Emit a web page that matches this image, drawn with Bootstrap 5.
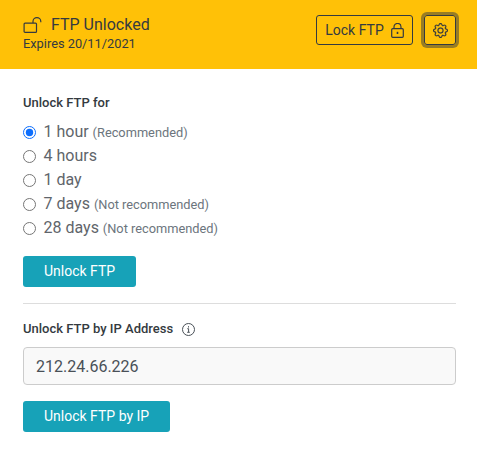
<!DOCTYPE html>
<html lang="en">
<head>
<meta charset="utf-8">
<title>FTP</title>
<link href="https://cdn.jsdelivr.net/npm/bootstrap@5.3.0/dist/css/bootstrap.min.css" rel="stylesheet">
<style>
body{font-family:Roboto,"Liberation Sans",sans-serif;color:#495057;background:#fff;overflow:hidden}
.ftp-head{height:69px;padding:15px 21px 0 23px;color:#343a40;background:#ffc107}
.ftp-title{font-size:16px;line-height:19px;margin-left:9px}
.ftp-exp{font-size:12.8px;line-height:15px;margin-top:2px}
.ftp-lock-btn{height:30px;width:97px;font-size:14px;padding:0;color:#343a40;border:1px solid #343a40;border-radius:3px;gap:7px}
.ftp-gear-btn{height:30px;width:32px;padding:0;color:#343a40;border:1px solid #343a40;border-radius:3px;box-shadow:0 0 0 3px rgba(52,58,64,.5);margin-left:11px}
.ftp-body{padding:26px 21px 0 23px}
.ftp-label{font-size:13px;font-weight:500;line-height:16px;color:#343a40}
.ftp-radios{margin-top:9px}
.ftp-radios .form-check{height:24px;line-height:24px;margin:0;padding-left:20.5px;font-size:16px;color:#5f656b}
.ftp-radios .form-check-label{display:block;line-height:24px}
.ftp-radios .form-check-input{width:13px;height:13px;margin-top:5.5px;margin-left:-20.5px;border-color:#767676}
.ftp-radios .form-check-input:checked{background-color:#fff;border-color:#0d6efd;background-image:url("data:image/svg+xml,%3csvg xmlns='http://www.w3.org/2000/svg' viewBox='-4 -4 8 8'%3e%3ccircle r='2.700' fill='%230d6efd'/%3e%3c/svg%3e")}
.ftp-radios small{font-size:12.8px;color:#6c757d}
.ftp-btn{background:#17a2b8;border:0;color:#fff;font-size:14px;font-weight:400;height:31px;padding:0 21px;border-radius:3px}
.ftp-btn:hover{background:#17a2b8;color:#fff}
.ftp-rule{margin:16px 0 17px;border-color:#ddd;opacity:1}
.ftp-ip{height:38px;font-size:16px;padding:0 12px;background:#f9f9f9;border:1px solid #ccc;border-radius:4px;color:#495057;margin:10px 0 16px}
.ftp-gap{margin-top:16px}
.ftp-info{margin-left:9px}
</style>
</head>
<body>
<div class="ftp-head d-flex align-items-start justify-content-between">
  <div>
    <div class="d-flex align-items-center">
      <svg width="19" height="16" viewBox="0 0 19 16" fill="none" stroke="#343a40" stroke-width="1.2"><rect x="1.100" y="6.100" width="12.400" height="9.300" rx="1"/><path d="M10 6V4.500a3.900 3.900 0 0 1 7.800 0v.8"/></svg>
      <span class="ftp-title">FTP Unlocked</span>
    </div>
    <div class="ftp-exp">Expires 20/11/2021</div>
  </div>
  <div class="d-flex align-items-center">
    <button type="button" class="btn ftp-lock-btn d-flex align-items-center justify-content-center">Lock FTP
      <svg width="13" height="15" viewBox="0 0 13 15" fill="none" stroke="#343a40" stroke-width="1.2"><rect x=".7" y="5.700" width="11.600" height="8.600" rx="1"/><path d="M3 5.700V3.900a3.500 3.500 0 0 1 7 0v1.800"/><path d="M6.500 8.800v2.200" stroke-width="1.600"/></svg>
    </button>
    <button type="button" class="btn ftp-gear-btn d-flex align-items-center justify-content-center" aria-label="Settings">
      <svg width="15" height="15" viewBox="0 0 16 16" fill="#343a40" stroke="#343a40" stroke-width=".25"><path d="M8 4.754a3.246 3.246 0 1 0 0 6.492 3.246 3.246 0 0 0 0-6.492zM5.754 8a2.246 2.246 0 1 1 4.492 0 2.246 2.246 0 0 1-4.492 0z"/><path d="M9.796 1.343c-.527-1.790-3.065-1.790-3.592 0l-.094.319a.873.873 0 0 1-1.255.52l-.292-.16c-1.640-.892-3.433.902-2.540 2.541l.159.292a.873.873 0 0 1-.52 1.255l-.319.094c-1.790.527-1.790 3.065 0 3.592l.319.094a.873.873 0 0 1 .52 1.255l-.16.292c-.892 1.640.901 3.434 2.541 2.540l.292-.159a.873.873 0 0 1 1.255.52l.094.319c.527 1.790 3.065 1.790 3.592 0l.094-.319a.873.873 0 0 1 1.255-.52l.292.16c1.640.893 3.434-.902 2.540-2.541l-.159-.292a.873.873 0 0 1 .52-1.255l.319-.094c1.790-.527 1.790-3.065 0-3.592l-.319-.094a.873.873 0 0 1-.52-1.255l.16-.292c.893-1.640-.902-3.433-2.541-2.540l-.292.159a.873.873 0 0 1-1.255-.52l-.094-.319zm-2.633.283c.246-.835 1.428-.835 1.674 0l.094.319a1.873 1.873 0 0 0 2.693 1.115l.291-.16c.764-.415 1.600.42 1.184 1.185l-.159.292a1.873 1.873 0 0 0 1.116 2.692l.318.094c.835.246.835 1.428 0 1.674l-.319.094a1.873 1.873 0 0 0-1.115 2.693l.16.291c.415.764-.42 1.600-1.185 1.184l-.291-.159a1.873 1.873 0 0 0-2.693 1.116l-.094.318c-.246.835-1.428.835-1.674 0l-.094-.319a1.873 1.873 0 0 0-2.692-1.115l-.292.16c-.764.415-1.600-.42-1.184-1.185l.159-.291A1.873 1.873 0 0 0 1.945 8.930l-.319-.094c-.835-.246-.835-1.428 0-1.674l.319-.094A1.873 1.873 0 0 0 3.060 4.377l-.16-.292c-.415-.764.42-1.600 1.185-1.184l.292.159a1.873 1.873 0 0 0 2.692-1.115l.094-.319z"/></svg>
    </button>
  </div>
</div>
<div class="ftp-body">
  <div class="ftp-label">Unlock FTP for</div>
  <div class="ftp-radios">
    <div class="form-check"><input class="form-check-input" type="radio" name="t" id="r1" checked><label class="form-check-label" for="r1">1 hour <small>(Recommended)</small></label></div>
    <div class="form-check"><input class="form-check-input" type="radio" name="t" id="r2"><label class="form-check-label" for="r2">4 hours</label></div>
    <div class="form-check"><input class="form-check-input" type="radio" name="t" id="r3"><label class="form-check-label" for="r3">1 day</label></div>
    <div class="form-check"><input class="form-check-input" type="radio" name="t" id="r4"><label class="form-check-label" for="r4">7 days <small>(Not recommended)</small></label></div>
    <div class="form-check"><input class="form-check-input" type="radio" name="t" id="r5"><label class="form-check-label" for="r5">28 days <small>(Not recommended)</small></label></div>
  </div>
  <button type="button" class="btn ftp-btn ftp-gap">Unlock FTP</button>
  <hr class="ftp-rule">
  <div class="ftp-label d-flex align-items-center">Unlock FTP by IP Address
    <svg class="ftp-info" width="13" height="13" viewBox="0 0 13 13" fill="none" stroke="#495057"><circle cx="6.500" cy="6.500" r="6"/><path d="M5.300 5.700h1.300v3.300M5.200 9.300h2.600M6.500 3.200v1.300"/></svg>
  </div>
  <input class="form-control ftp-ip" type="text" value="212.24.66.226">
  <button type="button" class="btn ftp-btn">Unlock FTP by IP</button>
</div>
<script src="https://cdn.jsdelivr.net/npm/bootstrap@5.3.0/dist/js/bootstrap.bundle.min.js"></script>
</body>
</html>
